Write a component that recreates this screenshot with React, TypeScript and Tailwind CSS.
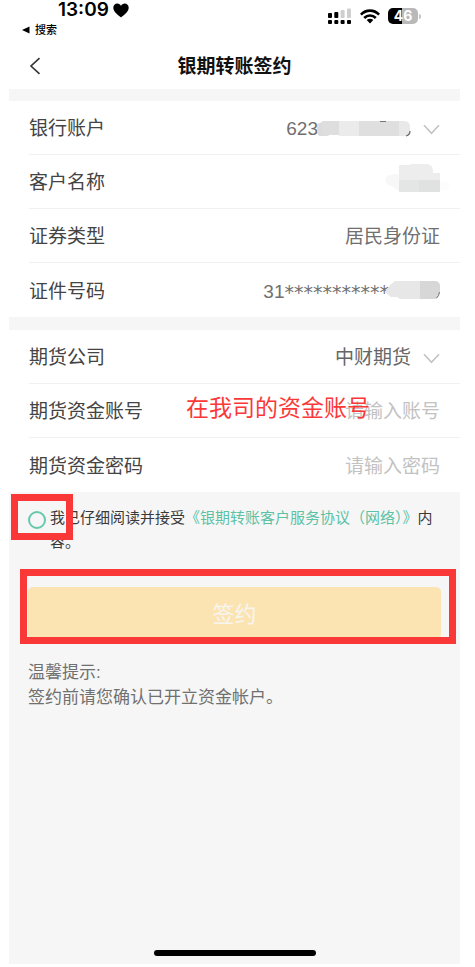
import type { ReactNode } from "react";

function StatusBar() {
  return (
    <div className="flex h-[42px] items-start justify-between pr-[39px] pl-[13px]">
      <div>
        <div className="flex h-5 items-center gap-1 pl-9 font-['Inter','Liberation_Sans',sans-serif] text-[19px] leading-5 font-semibold text-black">
          <span>13:09</span>
          <svg width="16" height="15" viewBox="0 0 16 15" aria-hidden="true">
            <path
              d="M8 14.500C6.500 13 .3 9.300 .3 4.800 .3 2.300 2.100.6 4.300.6 5.900.6 7.300 1.500 8 2.900 8.700 1.500 10.100.6 11.700.6c2.200 0 4 1.700 4 4.200C15.700 9.300 9.500 13 8 14.500z"
              fill="#000"
            />
          </svg>
        </div>
        <a href="#search" className="mt-0.5 flex h-4 items-center gap-[5px] text-[11px] leading-4 font-medium text-black">
          <svg width="8" height="8" viewBox="0 0 8 8" aria-hidden="true">
            <path d="M0 4 7.500.5v7z" fill="#000" />
          </svg>
          搜索
        </a>
      </div>
      <div className="flex h-8 items-center gap-2">
        <svg width="24" height="16" viewBox="0 0 24 16" aria-hidden="true">
          <g fill="#000">
            <rect x="0" y="5" width="4" height="5" rx="1" />
            <rect x="6.300" y="4" width="4" height="6" rx="1" />
            <rect x="0" y="12" width="4" height="4" rx="1" />
            <rect x="6.300" y="12" width="4" height="4" rx="1" />
            <rect x="12.600" y="12" width="4" height="4" rx="1" />
            <rect x="19" y="12" width="4" height="4" rx="1" />
          </g>
          <g fill="#cfcfcf">
            <rect x="12.600" y="2" width="4" height="8" rx="1" />
            <rect x="19" y="0.500" width="4" height="9.500" rx="1" />
          </g>
        </svg>
        <svg width="20" height="15" viewBox="0 0 20 15" aria-hidden="true">
          <g fill="none" stroke="#000" strokeWidth="2.600">
            <path d="M.9 5.600C6 .3 14 .3 19.100 5.600" />
            <path d="M4.200 9C7.500 5.700 12.500 5.700 15.800 9" />
          </g>
          <path d="M6.700 11.100c1.900-1.700 4.700-1.700 6.600 0L10 14.500z" fill="#000" />
        </svg>
        <div className="flex items-center gap-px">
          <div className="flex h-4 w-[30px] items-center justify-center rounded-[5px] bg-linear-to-r from-black from-47% to-[#b9b9b9] to-47% font-['Inter','Liberation_Sans',sans-serif] text-[14px] leading-4 font-bold text-white">
            46
          </div>
          <div className="h-[5px] w-[2px] rounded-r-full bg-[#c4c4c4]" />
        </div>
      </div>
    </div>
  );
}

function Chevron() {
  return (
    <svg width="17" height="11" viewBox="0 0 17 11" aria-hidden="true" className="pointer-events-none absolute right-5">
      <path d="M1 1.200 8.500 9.300 16 1.200" fill="none" stroke="#c3c3c3" strokeWidth="1.600" />
    </svg>
  );
}

function Row({ label, htmlFor, last, children }: { label: string; htmlFor?: string; last?: boolean; children: ReactNode }) {
  return (
    <div className="pl-5">
      <div
        className={
          last
            ? "relative flex h-[54px] items-center justify-between pt-[3px]"
            : "relative flex h-[54px] items-center justify-between border-b border-[#f0f0f0] pt-[3px]"
        }
      >
        <label htmlFor={htmlFor} className="shrink-0 text-[#444]">
          {label}
        </label>
        {children}
      </div>
    </div>
  );
}

function AccountMask() {
  return (
    <svg width="94" height="16" viewBox="0 0 94 16" aria-hidden="true" className="pointer-events-none absolute right-[49px]">
      <path d="M0 3 8 0h8v15H2L0 12z" fill="#dcdcdc" />
      <rect x="5" width="17" height="14" fill="#dedede" />
      <path d="M10 15 14 13.500 18 15z" fill="#fff" />
      <rect x="22" width="20" height="15" fill="#ebebeb" />
      <rect x="42" width="40" height="15" fill="#dfdfdf" />
      <path d="M82 0h6q5 1 5 6v5q-1 4-5 4h-6z" fill="#e9e9e9" />
      <path d="M63 .5h6" stroke="#777" />
      <path d="M93 10q0 4-4 5" fill="none" stroke="#666" strokeWidth="1.200" />
    </svg>
  );
}

function NameMask() {
  return (
    <svg width="65" height="28" viewBox="0 0 65 28" aria-hidden="true" className="-mt-[11px] mr-[10px]">
      <path d="M14 10Q1 9 0 16q1 5 7 6l7 5z" fill="#f7f7f7" />
      <path d="M55 18h8q3 4-1 8h-7z" fill="#fcfcfc" />
      <path d="M14 1h10l2-1h16q6 1 6 7v2h7v7H14z" fill="#ededed" />
      <rect x="14" y="16" width="20" height="12" fill="#e4e6e5" />
      <rect x="34" y="16" width="21" height="12" fill="#e0e2e1" />
    </svg>
  );
}

function IdMask() {
  return (
    <svg width="55" height="18" viewBox="0 0 55 18" aria-hidden="true" className="-mt-[3px] -ml-1">
      <path d="M0 11 5 4l5-4h25v18H15l-3-2H6z" fill="#e7e7e7" />
      <path d="M35 0h16q4 1 4 5v6q-1 6-4 7H35z" fill="#d7d7d7" />
      <path d="M54.500 11q-.5 4-3 6" fill="none" stroke="#777" />
    </svg>
  );
}

export default function App() {
  return (
    <div className="flex min-h-screen bg-white pr-[15px] pb-[3px] pl-[9px] font-['Liberation_Sans','Noto_Sans_CJK_SC',sans-serif]">
      <div className="flex min-w-0 flex-1 flex-col bg-[#f6f6f6]">
        <header className="bg-white">
          <StatusBar />
          <div className="flex h-[47px] items-center">
            <button type="button" aria-label="返回" className="flex w-16 items-center pl-5">
              <svg width="12" height="18" viewBox="0 0 12 18" aria-hidden="true">
                <path d="M10.500 1.200 2 9l8.500 7.800" fill="none" stroke="#333" strokeWidth="1.600" />
              </svg>
            </button>
            <h1 className="flex-1 pt-[3px] text-center text-[19px] font-bold text-[#111]">银期转账签约</h1>
            <div className="w-16" />
          </div>
        </header>

        <main className="flex flex-1 flex-col text-[19px] leading-[28px]">
          <section className="mt-3 bg-white">
            <Row label="银行账户" htmlFor="bank">
              <select
                id="bank"
                className="min-w-0 flex-1 appearance-none bg-transparent pr-[142px] text-right text-[#707070] [text-align-last:right]"
              >
                <option>623</option>
              </select>
              <AccountMask />
              <Chevron />
            </Row>
            <Row label="客户名称">
              <NameMask />
            </Row>
            <Row label="证券类型">
              <span className="pr-5 text-[#707070]">居民身份证</span>
            </Row>
            <Row label="证件号码" last>
              <span className="flex items-center pr-5 text-[#707070]">
                31<span className="font-['DejaVu_Sans',sans-serif]">***********</span>
                <IdMask />
              </span>
            </Row>
          </section>

          <section className="mt-[13px] bg-white">
            <Row label="期货公司" htmlFor="company">
              <select
                id="company"
                className="min-w-0 flex-1 appearance-none bg-transparent pr-[49px] text-right text-[#666] [text-align-last:right]"
              >
                <option>中财期货</option>
              </select>
              <Chevron />
            </Row>
            <Row label="期货资金账号" htmlFor="fund">
              <input
                id="fund"
                type="text"
                placeholder="请输入账号"
                className="min-w-0 flex-1 bg-transparent pr-5 text-right outline-none placeholder:text-[#c2c2c2]"
              />
              <span className="pointer-events-none absolute right-[90px] bottom-3 text-[23px] leading-[34px] text-[#fb3838]">
                在我司的资金账号
              </span>
            </Row>
            <Row label="期货资金密码" htmlFor="password" last>
              <input
                id="password"
                type="password"
                placeholder="请输入密码"
                className="min-w-0 flex-1 bg-transparent pr-5 text-right outline-none placeholder:text-[#c2c2c2]"
              />
            </Row>
          </section>

          <div className="relative flex items-start gap-1 px-[19px] pt-[14px] text-[15px] leading-6 text-[#3a3a3a]">
            <input
              id="agree"
              type="checkbox"
              className="mt-[5px] size-[18px] shrink-0 appearance-none rounded-full border-2 border-[#67c8ac] bg-transparent checked:bg-[#67c8ac]"
            />
            <p>
              <label htmlFor="agree">我已仔细阅读并接受</label>
              <a href="#agreement" className="text-[#5dc2a5]">
                《银期转账客户服务协议（网络）》
              </a>
              内容。
            </p>
            <div className="pointer-events-none absolute top-[2px] left-[2px] h-[46px] w-[62px] border-7 border-[#fb3838]" />
          </div>

          <div className="relative mx-[19px] mt-[33px]">
            <button type="button" className="h-[52px] w-full rounded-[5px] bg-[#fce4b2] pt-[3px] text-[22px] text-[#f7f5f0]">
              签约
            </button>
            <div className="pointer-events-none absolute -top-[18px] -right-[15px] -bottom-[5px] -left-[8px] border-7 border-[#fb3838]" />
          </div>

          <div className="mt-[21px] px-[19px] text-[17px] leading-[25px] text-[#707070]">
            <p>温馨提示:</p>
            <p>签约前请您确认已开立资金帐户。</p>
          </div>
        </main>

        <div className="mx-auto mb-2 h-[6px] w-[162px] rounded-full bg-black" />
      </div>
    </div>
  );
}
